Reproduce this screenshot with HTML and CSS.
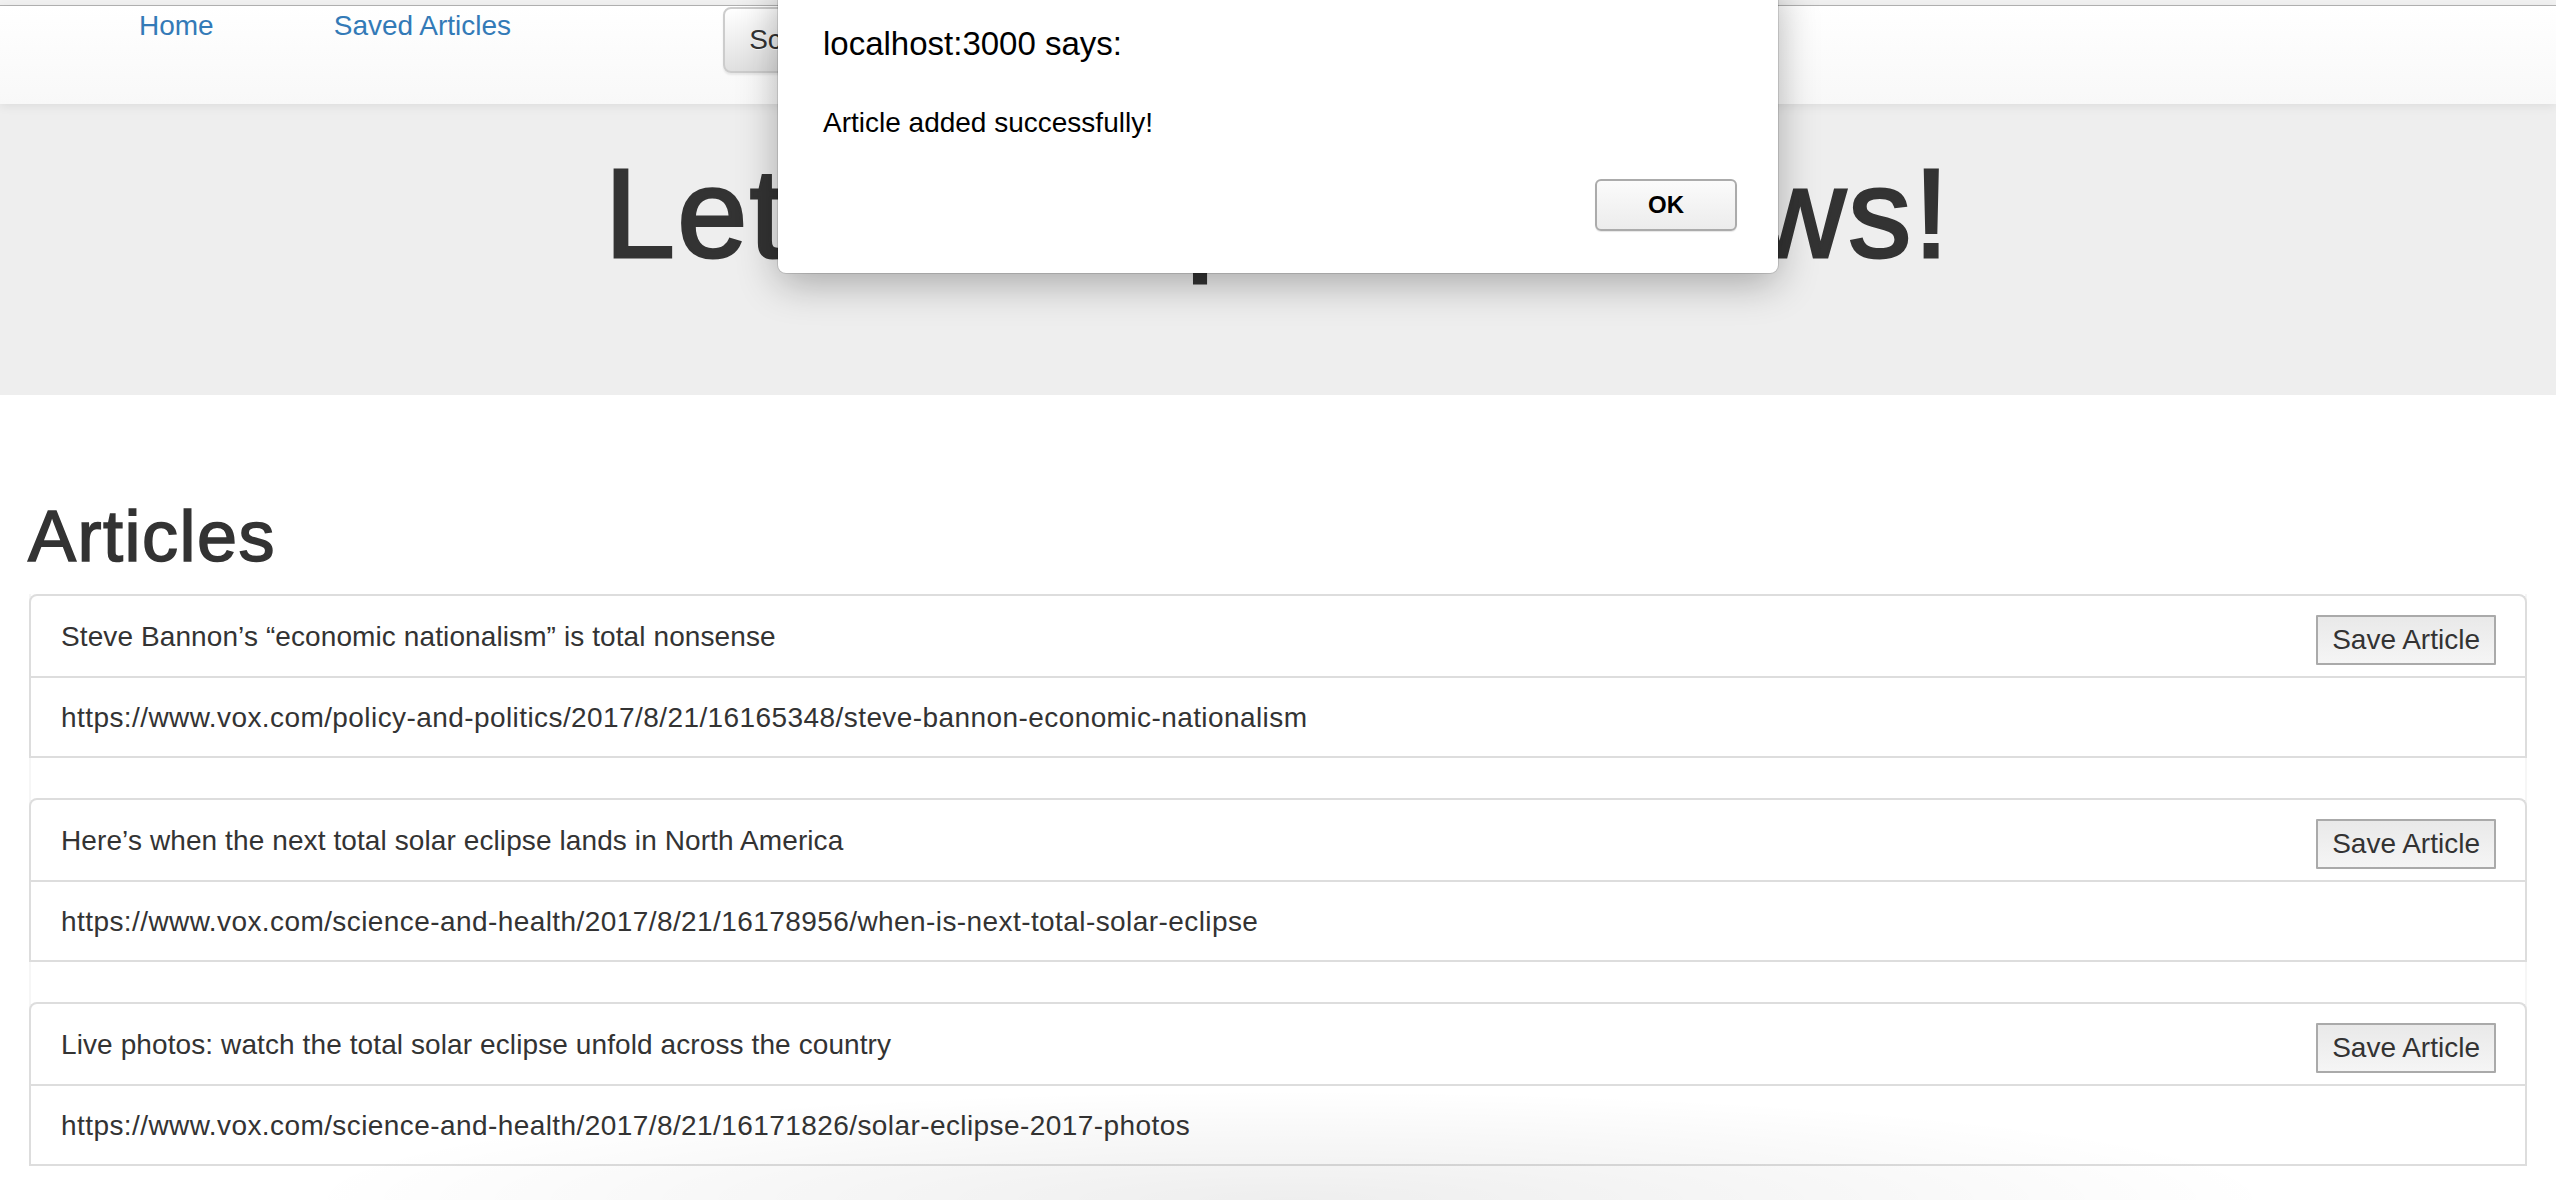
FILE: index.html
```html
<!DOCTYPE html>
<html lang="en">
<head>
<meta charset="utf-8">
<title>Scraper</title>
<link rel="stylesheet" href="styles.css">
</head>
<body>
<div class="topstrip"></div>
<nav class="navbar">
  <a class="nav-link" href="#">Home</a>
  <a class="nav-link" href="#">Saved Articles</a>
  <button class="btn-scrape">Scrape New Articles!</button>
</nav>
<header class="jumbotron">
  <h1 class="jumbo-title">Let's Scrape the News!</h1>
</header>
<main class="content">
  <h1 class="section-title">Articles</h1>
  <div class="article-list">
    <div class="article">
      <div class="article-head">
        <span class="article-title">Steve Bannon’s “economic nationalism” is total nonsense</span>
        <button class="btn-save">Save Article</button>
      </div>
      <div class="article-body">https://www.vox.com/policy-and-politics/2017/8/21/16165348/steve-bannon-economic-nationalism</div>
    </div>
    <div class="article">
      <div class="article-head">
        <span class="article-title">Here’s when the next total solar eclipse lands in North America</span>
        <button class="btn-save">Save Article</button>
      </div>
      <div class="article-body">https://www.vox.com/science-and-health/2017/8/21/16178956/when-is-next-total-solar-eclipse</div>
    </div>
    <div class="article">
      <div class="article-head">
        <span class="article-title">Live photos: watch the total solar eclipse unfold across the country</span>
        <button class="btn-save">Save Article</button>
      </div>
      <div class="article-body">https://www.vox.com/science-and-health/2017/8/21/16171826/solar-eclipse-2017-photos</div>
    </div>
  </div>
</main>
<div class="bottom-shade"></div>
<div class="dialog">
  <div class="dialog-title">localhost:3000 says:</div>
  <div class="dialog-msg">Article added successfully!</div>
  <div class="dialog-actions"><button class="btn-ok">OK</button></div>
</div>
</body>
</html>
```

FILE: styles.css
```css
html, body {
  margin: 0;
  padding: 0;
}
html {
  height: 1200px;
  overflow: hidden;
}
body {
  font-family: "Liberation Sans", Arial, Helvetica, sans-serif;
  color: #333;
  background: #fff;
  position: relative;
  height: 1200px;
  overflow: hidden;
}
.topstrip {
  height: 5px;
  background: #f1f1f1;
  border-bottom: 1px solid #b4b4b4;
}
.navbar {
  height: 98px;
  display: flex;
  align-items: flex-start;
  padding-left: 139px;
  background: linear-gradient(to bottom, #ffffff 0%, #f8f8f8 100%);
  box-shadow: 0 2px 10px rgba(0, 0, 0, 0.08);
  position: relative;
  z-index: 1;
}
.nav-link {
  font-size: 28px;
  line-height: 40px;
  color: #337ab7;
  text-decoration: none;
}
.nav-link + .nav-link {
  margin-left: 120px;
}
.btn-scrape {
  margin-left: 212px;
  margin-top: 1px;
  height: 66px;
  padding: 0 24px;
  border: 2px solid #ccc;
  border-radius: 8px;
  font-family: inherit;
  font-size: 28px;
  color: #333;
  text-shadow: 0 1px 0 #fff;
  background: linear-gradient(to bottom, #ffffff 0%, #e0e0e0 100%);
  box-shadow: 0 2px 2px rgba(0, 0, 0, 0.08);
}
.jumbotron {
  height: 291px;
  box-sizing: border-box;
  padding-top: 41px;
  background: #eee;
}
.jumbo-title {
  margin: 0;
  text-align: center;
  font-size: 126px;
  line-height: 1.1;
  font-weight: 400;
  letter-spacing: 2.5px;
  -webkit-text-stroke: 3px #333;
  color: #333;
}
.content {
  padding: 0 29px;
}
.section-title {
  margin: 102px 0 18px;
  font-size: 72px;
  line-height: 1.1;
  font-weight: 400;
  letter-spacing: 1.5px;
  -webkit-text-stroke: 1.6px #333;
  color: #333;
  margin-left: -1px;
}
.article-list {
  box-shadow: inset 2px 0 0 #f6f6f6, inset -2px 0 0 #f6f6f6;
}
.article {
  border: 2px solid #ddd;
  border-bottom: none;
  border-radius: 8px 8px 0 0;
  margin-bottom: 40px;
  background: #fff;
}
.article-head {
  height: 80px;
  padding: 0 29px 0 30px;
  display: flex;
  align-items: center;
  justify-content: space-between;
  border-bottom: 2px solid #ddd;
}
.article-title {
  font-size: 28px;
  line-height: 40px;
  letter-spacing: 0.1px;
  padding-top: 1px;
}
.btn-save {
  margin-top: 8px;
  height: 50px;
  padding: 0 14px;
  border: 2px solid #aaa;
  border-radius: 1px;
  font-family: inherit;
  font-size: 28px;
  color: #333;
  background: linear-gradient(to bottom, #e9e9e9 0%, #f5f5f5 100%);
}
.article-body {
  height: 77px;
  padding: 1px 30px 0;
  display: flex;
  align-items: center;
  font-size: 28px;
  line-height: 40px;
  letter-spacing: 0.42px;
  border-bottom: 2px solid #ddd;
}
.bottom-shade {
  position: absolute;
  left: 300px;
  width: 1980px;
  top: 1090px;
  height: 110px;
  background: radial-gradient(ellipse 50% 100% at 50% 100%, rgba(0, 0, 0, 0.065) 0%, rgba(0, 0, 0, 0.03) 55%, rgba(0, 0, 0, 0) 100%);
  pointer-events: none;
}
.dialog {
  position: absolute;
  top: -20px;
  left: 778px;
  width: 1000px;
  height: 293px;
  box-sizing: border-box;
  padding: 44px 41px 42px 45px;
  background: #fff;
  border-radius: 8px;
  box-shadow: 0 0 0 1px rgba(0, 0, 0, 0.12), 0 10px 40px rgba(0, 0, 0, 0.3);
  z-index: 5;
  display: flex;
  flex-direction: column;
  color: #000;
}
.dialog-title {
  font-size: 33px;
  line-height: 40px;
}
.dialog-msg {
  margin-top: 39px;
  font-size: 28px;
  line-height: 40px;
}
.dialog-actions {
  margin-top: auto;
  display: flex;
  justify-content: flex-end;
}
.btn-ok {
  width: 142px;
  height: 52px;
  border: 2px solid #ababab;
  border-radius: 6px;
  font-family: inherit;
  font-size: 24px;
  font-weight: 700;
  color: #000;
  background: linear-gradient(to bottom, #fbfbfb 0%, #ececec 100%);
  box-shadow: 0 1px 1px rgba(0, 0, 0, 0.1);
}
```
